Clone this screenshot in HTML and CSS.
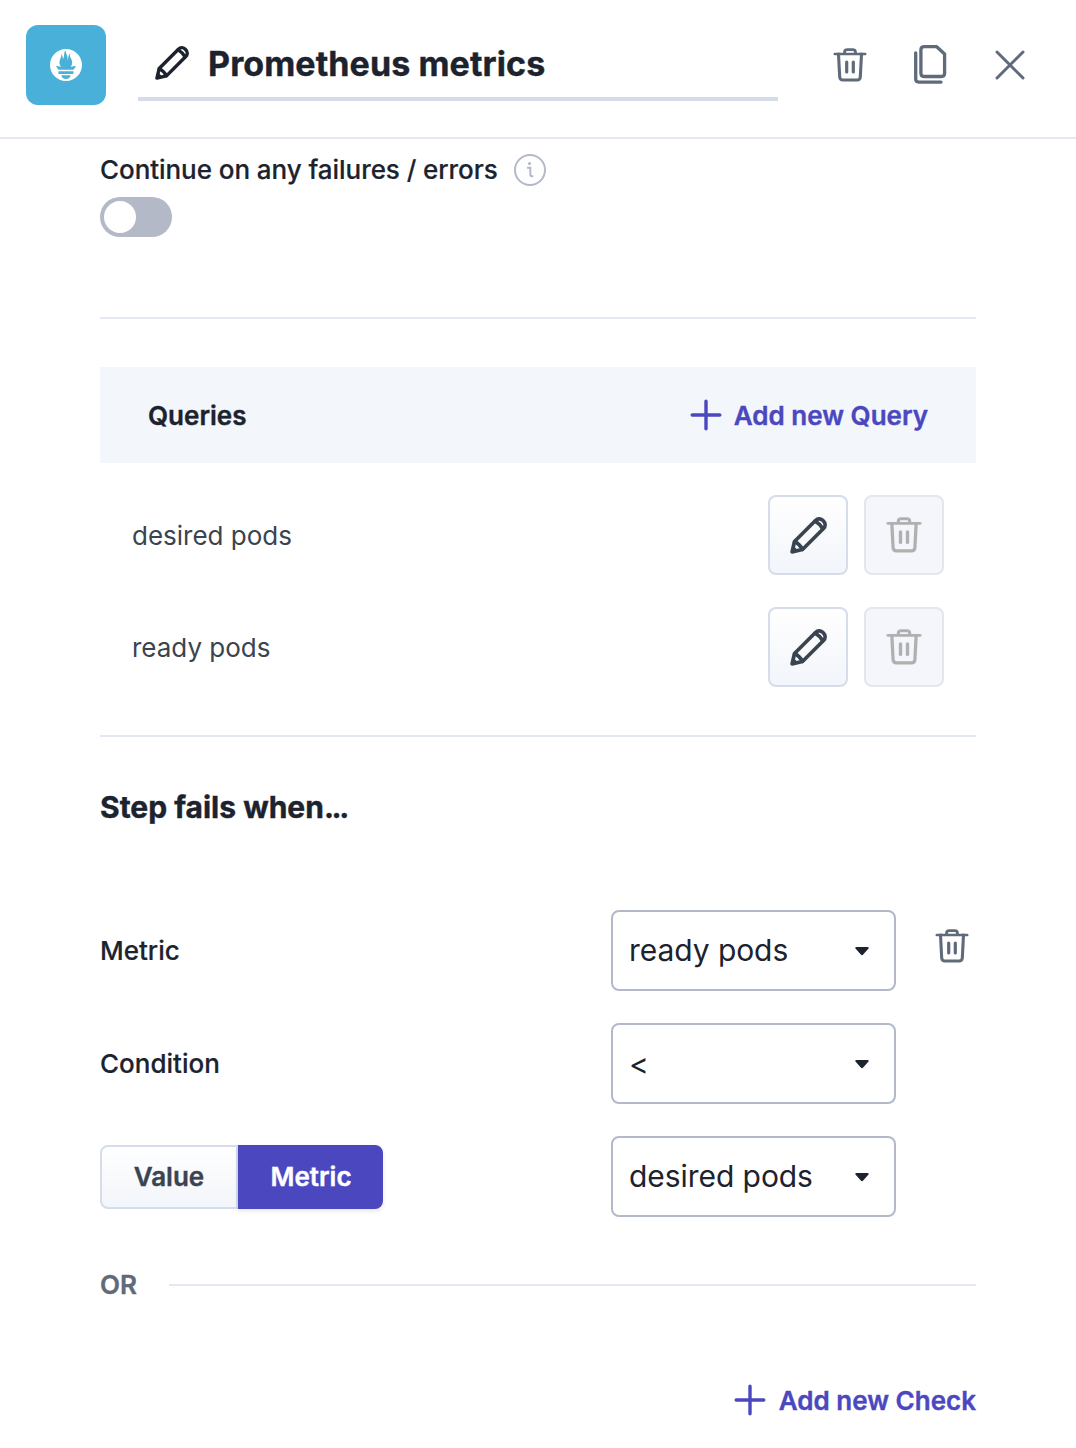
FILE: index.html
```html
<!DOCTYPE html>
<html lang="en">
<head>
<meta charset="utf-8">
<title>Prometheus metrics</title>
<link rel="stylesheet" href="styles.css">
</head>
<body>
<svg class="defs" aria-hidden="true">
  <symbol id="trash" viewBox="0 0 34 34" fill="none" stroke="currentColor" stroke-linecap="round" stroke-linejoin="round">
    <path d="M1.800 6H32.200" stroke-width="2.600"/>
    <path d="M11.500 5.500V4.500Q11.500 1.700 14.500 1.700H19.500Q22.500 1.700 22.500 4.500V5.500" stroke-width="2.800"/>
    <path d="M5.500 6L6.700 29Q6.900 32 9.900 32H24.100Q27.100 32 27.300 29L28.500 6" stroke-width="3.100"/>
    <path d="M13.700 14V24M20.300 14V24" stroke-width="3.200"/>
  </symbol>
  <symbol id="pencil" viewBox="0 0 37 37" fill="none" stroke="currentColor" stroke-width="3.700" stroke-linecap="round" stroke-linejoin="round">
    <path d="M2.100 34.900L4.500 24.500L25.500 3.500C30.500 -1.500 38.500 6.500 33.500 11.500L12.500 32.500Z"/>
    <path d="M25.200 4.200Q30 7 32.800 11.800M4.700 24.700Q9.800 27.200 12.300 32.300"/>
    <path d="M2.100 34.900L3.600 29.400L7.600 33.400Z" fill="currentColor" stroke-width="1"/>
  </symbol>
  <symbol id="plus" viewBox="0 0 32 32" fill="none" stroke="currentColor" stroke-width="3.400" stroke-linecap="round">
    <path d="M16 2.200V29.800M2.200 16H29.800"/>
  </symbol>
</svg>

<header class="header">
  <div class="logo">
    <svg width="32" height="32" viewBox="0 0 24 24" fill="#fff"><path d="M12 0C5.373 0 0 5.372 0 12c0 6.627 5.373 12 12 12s12-5.373 12-12c0-6.628-5.373-12-12-12zm0 22.460c-1.885 0-3.414-1.260-3.414-2.814h6.828c0 1.553-1.528 2.813-3.414 2.813zm5.640-3.745H6.360v-2.046h11.280v2.046zm-.040-3.098H6.391c-.037-.043-.075-.086-.111-.130-1.155-1.401-1.427-2.133-1.690-2.879-.005-.025 1.400.287 2.395.511 0 0 .513.119 1.262.255-.720-.843-1.147-1.915-1.147-3.010 0-2.406 1.845-4.508 1.180-6.207.648.053 1.340 1.367 1.387 3.422.689-.951.977-2.690.977-3.755 0-1.103.727-2.385 1.454-2.429-.648 1.069.168 1.984.894 4.256.272.854.237 2.290.447 3.201.070-1.892.395-4.652 1.595-5.605-.529 1.200.079 2.702.494 3.424.671 1.164 1.078 2.047 1.078 3.716a4.642 4.642 0 0 1-1.110 2.996c.792-.149 1.340-.283 1.340-.283l2.573-.502s-.374 1.538-1.810 3.019z"/></svg>
  </div>
  <div class="title-field">
    <svg class="title-pencil"><use href="#pencil"/></svg>
    <h1 class="title">Prometheus metrics</h1>
  </div>
  <div class="actions">
    <svg class="trash"><use href="#trash"/></svg>
    <svg width="34" height="42" viewBox="0 0 34 42" fill="none" stroke="currentColor" stroke-width="3.300" stroke-linecap="round" stroke-linejoin="round"><path d="M9.900 2.700H22.700L30.600 10V29.300Q30.600 32.500 27.400 32.500H10.100Q6.900 32.500 6.900 29.300V5.900Q6.900 2.700 10.100 2.700Z"/><path d="M1.700 9V35.100Q1.700 38.100 4.700 38.100H27"/></svg>
    <svg width="30" height="30" viewBox="0 0 30 30" fill="none" stroke="currentColor" stroke-width="3" stroke-linecap="round"><path d="M2 2L28 28M28 2L2 28"/></svg>
  </div>
</header>

<main class="content">
  <section class="option">
    <div class="option-head">
      <span class="label option-label">Continue on any failures / errors</span>
      <svg width="32" height="32" viewBox="0 0 32 32" fill="none" stroke="#b3b9c8" stroke-width="2"><circle cx="16" cy="16" r="15"/><circle cx="15.500" cy="9.500" r="1.600" fill="#b3b9c8" stroke="none"/><path d="M13 13.800H16.300V20.500Q16.300 22.300 18.100 22.300H19.300"/></svg>
    </div>
    <div class="toggle"><span class="knob"></span></div>
  </section>

  <section class="queries">
    <div class="queries-head">
      <span class="queries-title">Queries</span>
      <a class="add add-query"><svg class="plus"><use href="#plus"/></svg><span class="add-text">Add new Query</span></a>
    </div>
    <div class="query">
      <span class="query-name">desired pods</span>
      <button class="icon-button"><svg class="pencil"><use href="#pencil"/></svg></button>
      <button class="icon-button disabled"><svg class="trash"><use href="#trash"/></svg></button>
    </div>
    <div class="query">
      <span class="query-name">ready pods</span>
      <button class="icon-button"><svg class="pencil"><use href="#pencil"/></svg></button>
      <button class="icon-button disabled"><svg class="trash"><use href="#trash"/></svg></button>
    </div>
  </section>

  <section class="checks">
    <h2 class="checks-title">Step fails when<span class="dots">...</span></h2>
    <div class="check">
      <span class="label">Metric</span>
      <div class="select"><span>ready pods</span><svg class="caret" viewBox="0 0 14 9"><path d="M1.500 0H12.500Q14.500 .4 13.300 1.800L8.200 7.600Q7 8.700 5.800 7.600L.7 1.800Q-.5 .4 1.500 0Z"/></svg></div>
      <svg class="trash"><use href="#trash"/></svg>
    </div>
    <div class="check">
      <span class="label">Condition</span>
      <div class="select"><span class="operator">&lt;</span><svg class="caret" viewBox="0 0 14 9"><path d="M1.500 0H12.500Q14.500 .4 13.300 1.800L8.200 7.600Q7 8.700 5.800 7.600L.7 1.800Q-.5 .4 1.500 0Z"/></svg></div>
    </div>
    <div class="check">
      <div class="segment"><span class="seg">Value</span><span class="seg active">Metric</span></div>
      <div class="select"><span>desired pods</span><svg class="caret" viewBox="0 0 14 9"><path d="M1.500 0H12.500Q14.500 .4 13.300 1.800L8.200 7.600Q7 8.700 5.800 7.600L.7 1.800Q-.5 .4 1.500 0Z"/></svg></div>
    </div>
    <div class="or"><span>OR</span></div>
    <a class="add add-check"><svg class="plus"><use href="#plus"/></svg><span class="add-text">Add new Check</span></a>
  </section>
</main>
</body>
</html>
```
FILE: styles.css
```css
* { box-sizing: border-box; }
body {
  margin: 0;
  height: 1448px;
  overflow: hidden;
  background: #fff;
  color: #1c232e;
  font: 500 26px/32px Inter, "Liberation Sans", sans-serif;
}
svg { display: block; flex: none; }
.defs { display: none; }

.header {
  display: flex;
  height: 139px;
  padding: 25px 51px 0 26px;
  border-bottom: 2px solid #e4e8f3;
}
.logo {
  display: grid;
  place-items: center;
  width: 80px;
  height: 80px;
  border-radius: 12px;
  background: #48b0d9;
}
.title-field {
  display: flex;
  align-items: center;
  width: 640px;
  height: 76px;
  margin-left: 32px;
  padding: 4px 0 0 17px;
  border-bottom: 4px solid #d4dce8;
}
.title-pencil { width: 34px; height: 34px; }
.title {
  margin: 0 0 0 19px;
  padding-top: 2px;
  font-size: 34px;
  font-weight: 700;
  letter-spacing: .1px;
  line-height: 44px;
  white-space: nowrap;
  -webkit-text-stroke: .4px;
}
.actions {
  display: flex;
  align-items: center;
  justify-content: space-between;
  width: 192px;
  height: 80px;
  margin-left: auto;
  color: #5f6b7a;
}
.trash { width: 34px; height: 34px; }

.content { padding: 15px 100px 0; }
.option { height: 165px; border-bottom: 2px solid #e4e8f3; }
.option-head { display: flex; align-items: center; gap: 16px; }
.label { white-space: nowrap; -webkit-text-stroke: .2px; }
.option-label { letter-spacing: -.06px; }
.toggle {
  width: 72px;
  height: 40px;
  margin-top: 11px;
  padding: 4px;
  border-radius: 20px;
  background: #b3b9c6;
}
.knob {
  display: block;
  width: 32px;
  height: 32px;
  border-radius: 50%;
  background: #fff;
}

.queries {
  height: 418px;
  padding-top: 48px;
  border-bottom: 2px solid #e4e8f3;
}
.queries-head {
  display: flex;
  align-items: center;
  justify-content: space-between;
  height: 96px;
  padding: 0 48px;
  background: #f3f6fb;
}
.queries-title {
  padding-top: 2px;
  font-weight: 600;
  -webkit-text-stroke: .4px;
}
.add {
  display: flex;
  align-items: center;
  gap: 12px;
  color: #4b48bf;
  font-weight: 600;
  white-space: nowrap;
}
.add-text {
  padding-top: 2px;
  -webkit-text-stroke: .4px;
}
.plus { width: 32px; height: 32px; }
.query {
  display: flex;
  align-items: center;
  gap: 16px;
  height: 80px;
  margin-top: 32px;
  padding: 0 32px;
}
.query-name {
  flex: 1;
  padding-top: 2px;
  color: #3a4450;
  font-weight: 400;
}
.icon-button {
  display: grid;
  place-items: center;
  width: 80px;
  height: 80px;
  padding: 0;
  border: 2px solid #d4dde9;
  border-radius: 8px;
  background: linear-gradient(#fff, #f2f5fa);
  color: #3a4450;
}
.icon-button.disabled {
  border-color: #e4e6ec;
  background: #f4f6fb;
  color: #b0b0b0;
}
.pencil { width: 37px; height: 37px; }
.icon-button .trash { width: 36px; height: 36px; }

.checks-title {
  margin: 48px 0 80px;
  font-size: 30px;
  font-weight: 700;
  line-height: 45px;
  -webkit-text-stroke: .4px;
}
.dots { letter-spacing: -2.300px; }
.check {
  display: grid;
  grid-template-columns: 511px 285px 34px;
  align-items: center;
  height: 81px;
  margin-bottom: 32px;
}
.check .trash {
  margin: 0 0 9px 39px;
  color: #5f6b7a;
}
.select {
  display: flex;
  align-items: center;
  justify-content: space-between;
  height: 81px;
  padding: 0 25px 1px 16px;
  border: 2px solid #b3b9c8;
  border-radius: 8px;
  font-size: 30px;
  font-weight: 400;
  letter-spacing: -.06px;
}
.operator { padding-top: 1px; }
.caret { width: 14px; height: 9px; margin-top: 2px; fill: #1c232e; }
.segment { display: flex; height: 64px; }
.seg {
  width: 138px;
  border: 2px solid #d4dde9;
  border-radius: 8px 0 0 8px;
  background: linear-gradient(#fff, #f2f5fa);
  color: #3a4450;
  font-weight: 600;
  line-height: 60px;
  text-align: center;
  -webkit-text-stroke: .4px;
}
.seg.active {
  width: 145px;
  padding-left: 1px;
  border-color: #4b48bf;
  border-radius: 0 8px 8px 0;
  background: #4b48bf;
  box-shadow: 0 2px 4px rgba(30, 40, 80, .12);
  color: #fff;
}
.or {
  display: flex;
  align-items: center;
  gap: 32px;
  margin-top: 52px;
  color: #5f6b7a;
  font-weight: 600;
  -webkit-text-stroke: .4px;
}
.or::after {
  content: "";
  flex: 1;
  height: 2px;
  background: #e4e8f3;
}
.add-check { gap: 13px; justify-content: flex-end; margin-top: 82px; }
```
